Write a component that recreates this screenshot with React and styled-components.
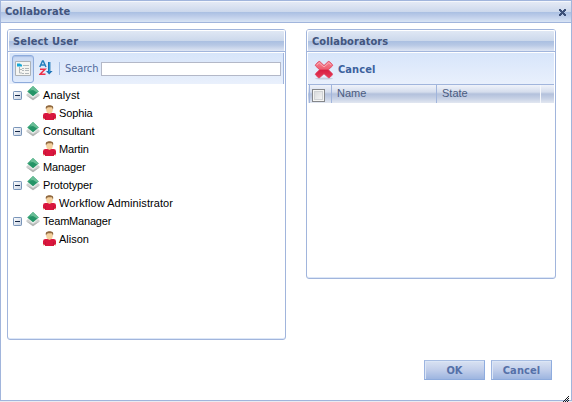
import React from "react";
import styled, { createGlobalStyle } from "styled-components";

const line = "#a1b5dc";
const ink = "#42557e";

const GlobalStyle = createGlobalStyle`
  * { box-sizing: border-box; }
  body { margin: 0; background: #e9ebf1; overflow: hidden; }
  svg { display: block; flex: none; }
`;

const Dialog = styled.div`
  width: 572px;
  height: 401px;
  border: 1px solid ${line};
  background: #fff;
  display: flex;
  flex-direction: column;
  font: 11px/13px "Liberation Sans", Arial, sans-serif;
  color: #000;
`;

const TitleBar = styled.header`
  height: 22px;
  flex: none;
  display: flex;
  align-items: center;
  justify-content: space-between;
  padding: 0 5px 0 4px;
  border-top: 1px solid #f4f7fc;
  border-bottom: 1px solid ${line};
  background: linear-gradient(#e4eaf5 0, #ccd8ec 10px, #a9bfe2 10px, #bccce9 14px, #d8e4f5 20px);
`;

const Heading = styled.span`
  font: bold 11px/14px "DejaVu Sans Condensed", Tahoma, sans-serif;
  letter-spacing: ${(p) => p.$track || "0.08"}px;
  color: ${(p) => p.$color || ink};
  white-space: nowrap;
`;

const Body = styled.main`
  display: flex;
  align-items: flex-start;
  gap: 20px;
  padding: 6px 15px 0 6px;
`;

const Panel = styled.section`
  width: ${(p) => p.$w}px;
  height: ${(p) => p.$h}px;
  border: 1px solid ${line};
  border-radius: 3px;
  box-shadow: inset 0 -1px 0 #dce7f8;
`;

const PanelHeader = styled.div`
  height: 22px;
  display: flex;
  align-items: center;
  padding: 2px 5px 0;
  border-bottom: 1px solid ${line};
  border-radius: 2px 2px 0 0;
  box-shadow: inset 1px 1px 0 #fff, inset -1px 0 0 #fff;
  background: linear-gradient(#e2e9f5 0, #cbd8eb 11px, #aabfe1 11px, #b7c8e5 15px, #dfe6f4 21px);
`;

const Toolbar = styled.div`
  height: 31px;
  margin: 1px 1px 0;
  display: flex;
  align-items: center;
  background: linear-gradient(#d7e5fa, #e9f0fc);
`;

const SearchToolbar = styled(Toolbar)`
  border-left: 1px solid #edf2fb;
  border-right: 1px solid ${line};
`;

const ViewButton = styled.div`
  width: 22px;
  height: 28px;
  margin-left: 2px;
  border: 1px solid #8eabdb;
  border-radius: 3px;
  display: flex;
  align-items: center;
  justify-content: center;
  background: linear-gradient(#c8d8f2, #e0ebfc);
  box-shadow: inset 0 1px 1px #a9c0e6;
`;

const SortButton = styled.div`
  margin: 0 0 1px 5px;
`;

const Divider = styled.div`
  width: 1px;
  height: 13px;
  margin: 0 5px 0 6px;
  background: #a8c0e5;
`;

const SearchLabel = styled.label`
  font: 11px/14px "DejaVu Sans Condensed", Tahoma, sans-serif;
  letter-spacing: -0.1px;
  width: 36px;
  color: #526b9d;
  white-space: nowrap;
`;

const SearchInput = styled.input`
  width: 180px;
  height: 14px;
  border: 1px solid #b3b8c8;
  background: #fff;
  padding: 0 2px;
  border-radius: 0;
  outline: none;
`;

const Tree = styled.ul`
  margin: 2px 0 0;
  padding: 0;
  list-style: none;
`;

const TreeRow = styled.li`
  height: 18px;
  display: flex;
  align-items: center;
  padding-left: ${(p) => (p.$child ? 35 : p.$leaf ? 18 : 5)}px;
`;

const Toggle = styled.span`
  width: 9px;
  height: 9px;
  margin: 1px 4px 0 0;
`;

const NodeIcon = styled.span`
  margin-bottom: ${(p) => (p.$child ? 1 : 3)}px;
`;

const NodeText = styled.span`
  margin-left: 3px;
  letter-spacing: ${(p) => p.$track ?? -0.12}px;
  white-space: nowrap;
`;

const CancelTool = styled.div`
  display: flex;
  align-items: center;
  gap: 4px;
  padding: 2px 0 0 6px;
`;

const GridHeader = styled.div`
  height: 19px;
  margin: 0 1px;
  padding-left: 1px;
  display: flex;
  border-top: 1px solid ${line};
  background: linear-gradient(#f0f3fa 0, #d5dded 7px, #b3c1dc 9px, #c4cfe4 13px, #e2e7f1 18px);
`;

const GridCell = styled.div`
  width: ${(p) => p.$w}px;
  flex: none;
  padding: 2px 0 0 5px;
  border-left: ${(p) => (p.$last ? "1px solid #f5f7fb" : `1px solid ${line}`)};
  color: #4b5c80;
`;

const CheckCell = styled(GridCell)`
  padding: 4px 0 0 2px;
`;

const Checkbox = styled.div`
  width: 13px;
  height: 13px;
  border: 1px solid #85878a;
  background: linear-gradient(135deg, #d3d5d6, #fafafa);
  box-shadow: inset 0 0 0 1px #f5f5f3, inset 0 0 0 2px #d0d2d4;
`;

const Footer = styled.footer`
  display: flex;
  justify-content: flex-end;
  gap: 6px;
  margin-top: 20px;
  padding-right: 19px;
`;

const Button = styled.button`
  width: 61px;
  height: 20px;
  padding: 2px 0 0;
  border: 1px solid #9cb4e0;
  border-top-color: #a8bee3;
  border-right-color: #8eacdf;
  border-bottom-color: #8eabdc;
  background: linear-gradient(#d9e2f2, #c1ceea 50%, #9db5e0);
  box-shadow: inset 1px 1px 0 #dce6f6;
  display: flex;
  align-items: center;
  justify-content: center;
`;

const ResizeGrip = styled.div`
  position: absolute;
  left: 563px;
  top: 396px;
`;

const RoleIcon = () => (
  <svg width="14" height="15" viewBox="0 0 14 15">
    <path d="M0 9 2.5 6.5h9L14 9l-7 5.3Z" fill="#cfd1d0" />
    <path d="M0 9.2 7 12l7-2.8-7 5.1Z" fill="#b4b7b5" />
    <path d="m1.4 6 5.6 5.2L12.6 6" fill="none" stroke="#f8faf8" strokeWidth="1" />
    <path d="m7 0 5.8 5.5L7 10.3 1.2 5.5Z" fill="#3ca579" />
    <path d="m7 0 5.8 5.5-2.8 1-6-3.6Z" fill="#69bd96" />
    <path d="m2.5 6 4.5-2 4 2.5-4 3.3Z" fill="#259467" />
  </svg>
);

const UserIcon = () => (
  <svg width="13" height="15" viewBox="0 0 13 15">
    <path d="M4.8 7h3.4v3H4.8Z" fill="#e7b77f" />
    <ellipse cx="6.5" cy="4.6" rx="3.3" ry="4" fill="#f4d09d" />
    <path d="M3 4.5C2 .9 4.2.3 6.6.3S11 1 10 4.5L8.8 2.3H5L3.8 3Z" fill="#8f683f" />
    <path d="M0 14v-3.7Q0 8 2.5 8h2l2 1 2-1h2Q13 8 13 10.3V14h-2v1H2v-1Z" fill="#d9163d" />
    <path d="M2.5 11v3M10.5 11v3" stroke="#af1735" strokeWidth=".6" />
    <path d="M0 13.3h1.3v1.2H0Zm11.7 0H13v1.2h-1.3Z" fill="#e4b184" />
  </svg>
);

const ToggleIcon = () => (
  <svg width="9" height="9" viewBox="0 0 9 9">
    <defs>
      <linearGradient id="toggleFill" x2="1" y2="1">
        <stop stopColor="#fff" />
        <stop offset="1" stopColor="#c5d0e1" />
      </linearGradient>
    </defs>
    <rect x=".5" y=".5" width="8" height="8" rx=".7" fill="url(#toggleFill)" stroke="#7894b8" />
    <path d="M2 4.5h5" stroke="#152848" />
  </svg>
);

const CloseIcon = () => (
  <svg width="7" height="7" viewBox="0 0 7 7" shapeRendering="crispEdges">
    <path d="M0 0h2v1h1v1h1V1h1V0h2v2H6v1H5v1h1v1h1v2H5V6H4V5H3v1H2v1H0V5h1V4h1V3H1V2H0Z" fill="#3d5078" />
  </svg>
);

const TreeViewIcon = () => (
  <svg width="16" height="15" viewBox="0 0 16 15">
    <path d="M.5.5h15v14H.5Z" fill="#f5f5f2" stroke="#adb2b6" />
    <path d="M2 2.5h3l1 1h1v2H2Z" fill="#17a7d6" />
    <path d="M4.5 6v6H7M4.5 8.5H7" fill="none" stroke="#b0b6b9" />
    <path d="M8 4.5h6M7 7.5h2m1 0h4M7 9.5h2m1 0h4M7 12.5h2m1 0h4" stroke="#b2b8bb" />
  </svg>
);

const SortIcon = () => (
  <svg width="14" height="16" viewBox="0 0 14 16">
    <path d="m.8 7 2.7-6h.7L7 7M2 5h4" fill="none" stroke="#2380bd" strokeWidth="1.5" />
    <path d="M1 9.2h5L1 14.3h5.5" fill="none" stroke="#ed3049" strokeWidth="1.6" />
    <path d="M9 2h2.4v9H13.6L10.2 14.5 7 11h2Z" fill="#1c73b6" />
    <path d="M10 2h1v10h-1Z" fill="#299dd2" />
  </svg>
);

const DeleteIcon = () => (
  <svg width="20" height="20" viewBox="0 0 20 20">
    <defs>
      <linearGradient id="crossFill" x2="0" y2="1">
        <stop stopColor="#f58794" />
        <stop offset=".48" stopColor="#ee5d70" />
        <stop offset=".52" stopColor="#d71d40" />
        <stop offset="1" stopColor="#e63d59" />
      </linearGradient>
    </defs>
    <ellipse cx="10" cy="18.6" rx="9" ry="1" fill="#c5cede" />
    <path d="M1.7 4.5 4.4 1.7q.8-.7 1.6 0L10 5.5l4-3.8q.8-.7 1.6 0l2.7 2.8q.7.8 0 1.6L14.4 9.7l3.8 3.8q.7.8 0 1.6l-2.4 2.4q-.8.7-1.6 0L10 13.8l-4.2 3.7q-.8.7-1.6 0l-2.5-2.4q-.7-.8 0-1.6l3.9-3.8-3.9-3.6q-.7-.8 0-1.6Z" fill="url(#crossFill)" stroke="#df3854" strokeWidth=".8" />
    <path d="m2.6 5.2 2.5-2.5L10 7l4.9-4.3 2.5 2.5" fill="none" stroke="#fbb1b9" strokeWidth=".9" />
  </svg>
);

const GripIcon = () => (
  <svg width="6" height="6" viewBox="0 0 6 6" shapeRendering="crispEdges">
    <path d="M5 0h1v1H5ZM4 1h1v1H4ZM3 2h1v1H3ZM2 3h1v1H2ZM1 4h1v1H1ZM0 5h1v1H0ZM5 2h1v1H5ZM4 3h1v1H4ZM3 4h1v1H3ZM2 5h1v1H2ZM5 4h1v1H5ZM4 5h1v1H4Z" fill="#17191d" />
  </svg>
);

const nodes = [
  { text: "Analyst", open: true, track: 0.08 },
  { text: "Sophia", child: true },
  { text: "Consultant", open: true },
  { text: "Martin", child: true },
  { text: "Manager" },
  { text: "Prototyper", open: true },
  { text: "Workflow Administrator", child: true, track: 0.08 },
  { text: "TeamManager", open: true, track: -0.2 },
  { text: "Alison", child: true, track: 0 },
];

export default function App() {
  return (
    <>
      <GlobalStyle />
      <Dialog>
        <TitleBar>
          <Heading>Collaborate</Heading>
          <CloseIcon />
        </TitleBar>
        <Body>
          <Panel $w={279} $h={311}>
            <PanelHeader><Heading $track={0.16}>Select User</Heading></PanelHeader>
            <SearchToolbar>
              <ViewButton><TreeViewIcon /></ViewButton>
              <SortButton><SortIcon /></SortButton>
              <Divider />
              <SearchLabel htmlFor="search">Search</SearchLabel>
              <SearchInput id="search" />
            </SearchToolbar>
            <Tree>
              {nodes.map((n) => (
                <TreeRow key={n.text} $child={n.child} $leaf={!n.child && !n.open}>
                  {n.open && <Toggle><ToggleIcon /></Toggle>}
                  <NodeIcon $child={n.child}>{n.child ? <UserIcon /> : <RoleIcon />}</NodeIcon>
                  <NodeText $track={n.track}>{n.text}</NodeText>
                </TreeRow>
              ))}
            </Tree>
          </Panel>
          <Panel $w={250} $h={250}>
            <PanelHeader><Heading>Collaborators</Heading></PanelHeader>
            <Toolbar>
              <CancelTool>
                <DeleteIcon />
                <Heading $color="#3c629d">Cancel</Heading>
              </CancelTool>
            </Toolbar>
            <GridHeader>
              <CheckCell $w={22}><Checkbox /></CheckCell>
              <GridCell $w={105}>Name</GridCell>
              <GridCell $w={104}>State</GridCell>
              <GridCell $w={14} $last />
            </GridHeader>
          </Panel>
        </Body>
        <Footer>
          <Button><Heading $color="#5570a8">OK</Heading></Button>
          <Button><Heading $color="#5570a8">Cancel</Heading></Button>
        </Footer>
        <ResizeGrip><GripIcon /></ResizeGrip>
      </Dialog>
    </>
  );
}
